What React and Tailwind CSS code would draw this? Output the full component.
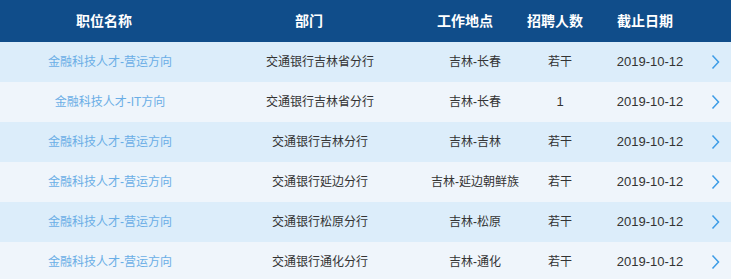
const jobs = [
  { title: "金融科技人才-营运方向", dept: "交通银行吉林省分行", place: "吉林-长春", count: "若干", date: "2019-10-12" },
  { title: "金融科技人才-IT方向", dept: "交通银行吉林省分行", place: "吉林-长春", count: "1", date: "2019-10-12" },
  { title: "金融科技人才-营运方向", dept: "交通银行吉林分行", place: "吉林-吉林", count: "若干", date: "2019-10-12" },
  { title: "金融科技人才-营运方向", dept: "交通银行延边分行", place: "吉林-延边朝鲜族", count: "若干", date: "2019-10-12" },
  { title: "金融科技人才-营运方向", dept: "交通银行松原分行", place: "吉林-松原", count: "若干", date: "2019-10-12" },
  { title: "金融科技人才-营运方向", dept: "交通银行通化分行", place: "吉林-通化", count: "若干", date: "2019-10-12" },
];

// thin chevron used at the end of each row
const Arrow = () => (
  <svg width="9" height="16" viewBox="0 0 9 16" fill="none">
    <polyline points="1.5,1.5 7.5,8 1.5,14.5" stroke="#3d9ce6" strokeWidth="1.5" />
  </svg>
);

const App = () => {
  return (
    <div className="w-[731px] h-[279px] overflow-hidden bg-white font-['Liberation_Sans','Noto_Sans_CJK_SC',sans-serif]">
      {/* header */}
      <div className="grid grid-cols-[208px_202px_110px_70px_110px_1fr] h-[42px] items-center bg-[#104d8a] text-white text-[14px] font-bold">
        <div className="text-center">职位名称</div>
        <div className="text-center">部门</div>
        <div className="text-center">工作地点</div>
        <div className="text-center">招聘人数</div>
        <div className="text-center">截止日期</div>
        <div />
      </div>

      {jobs.map((job, i) => (
        <div
          key={i}
          className={`grid grid-cols-[220px_200px_110px_60px_120px_1fr] h-[40px] items-center text-[12px] text-[#333333] ${
            i % 2 === 0 ? "bg-[#dcedfa]" : "bg-[#eff5fb]"
          }`}
        >
          <div className="text-center text-[#6aaee6]">{job.title}</div>
          <div className="text-center">{job.dept}</div>
          <div className="text-center">{job.place}</div>
          <div className={`text-center ${job.count === "1" ? "text-[13px]" : ""}`}>{job.count}</div>
          <div className="text-center text-[13px]">{job.date}</div>
          <div className="flex items-center pl-[1px]">
            <Arrow />
          </div>
        </div>
      ))}
    </div>
  );
};

export default App;
